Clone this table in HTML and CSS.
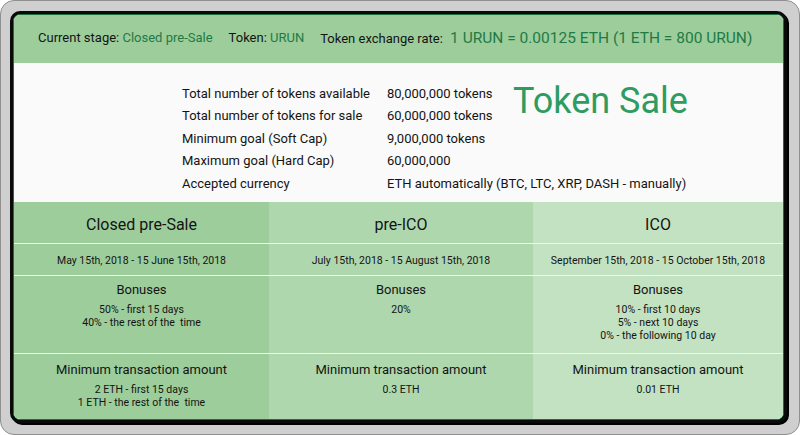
FILE: index.html
```html
<!DOCTYPE html>
<html>
<head>
<meta charset="utf-8">
<link rel="stylesheet" href="styles.css">
</head>
<body>
<div class="frame">
  <div class="card">
    <div class="inner">
      <div class="topbar">
        <span class="item">Current stage: <span class="g">Closed pre-Sale</span></span>
        <span class="item">Token: <span class="g">URUN</span></span>
        <span class="item">Token exchange rate: <span class="g big">1 URUN = 0.00125 ETH (1 ETH = 800 URUN)</span></span>
      </div>
      <div class="info">
        <div class="lbl r1">Total number of tokens available</div><div class="val r1">80,000,000 tokens</div>
        <div class="lbl r2">Total number of tokens for sale</div><div class="val r2">60,000,000 tokens</div>
        <div class="lbl r3">Minimum goal (Soft Cap)</div><div class="val r3">9,000,000 tokens</div>
        <div class="lbl r4">Maximum goal (Hard Cap)</div><div class="val r4">60,000,000</div>
        <div class="lbl r5">Accepted currency</div><div class="val r5 wide">ETH automatically (BTC, LTC, XRP, DASH - manually)</div>
        <h1 class="title">Token Sale</h1>
      </div>
      <div class="stages">
        <div class="cell c1 name">Closed pre-Sale</div>
        <div class="cell c2 name">pre-ICO</div>
        <div class="cell c3 name">ICO</div>

        <div class="cell c1 date">May 15th, 2018 - 15 June 15th, 2018</div>
        <div class="cell c2 date">July 15th, 2018 - 15 August 15th, 2018</div>
        <div class="cell c3 date">September 15th, 2018 - 15 October 15th, 2018</div>

        <div class="cell c1 block">
          <div class="bh">Bonuses</div>
          <div class="bl">50% - first 15 days</div>
          <div class="bl">40% - the rest of the&nbsp; time</div>
        </div>
        <div class="cell c2 block">
          <div class="bh">Bonuses</div>
          <div class="bl">20%</div>
        </div>
        <div class="cell c3 block">
          <div class="bh">Bonuses</div>
          <div class="bl">10% - first 10 days</div>
          <div class="bl">5% - next 10 days</div>
          <div class="bl">0% - the following 10 day</div>
        </div>

        <div class="cell c1 block last">
          <div class="bh">Minimum transaction amount</div>
          <div class="bl">2 ETH - first 15 days</div>
          <div class="bl">1 ETH - the rest of the&nbsp; time</div>
        </div>
        <div class="cell c2 block last">
          <div class="bh">Minimum transaction amount</div>
          <div class="bl">0.3 ETH</div>
        </div>
        <div class="cell c3 block last">
          <div class="bh">Minimum transaction amount</div>
          <div class="bl">0.01 ETH</div>
        </div>
      </div>
    </div>
  </div>
</div>
</body>
</html>
```
FILE: styles.css
```css
* { box-sizing: border-box; }
html, body { margin: 0; padding: 0; background: #ffffff; }
body {
  font-family: Roboto, "Liberation Sans", sans-serif;
  color: #141414;
  width: 800px;
  height: 435px;
  overflow: hidden;
}
.frame {
  width: 800px;
  height: 435px;
  border: 1px solid #8f8f8f;
  border-radius: 14px;
  background: #cfcfcf;
  padding: 10px 12px 11px 9px;
  display: flex;
}
.card {
  flex: 1;
  border: 3px solid #0a0a0a;
  border-radius: 10px;
  box-shadow: 2px 2px 0 #000;
  display: flex;
  background: #0a0a0a;
}
.inner {
  flex: 1;
  border: 1px solid #1d6e3c;
  border-radius: 7px;
  overflow: hidden;
  display: flex;
  flex-direction: column;
  background: #fafafa;
}
.topbar {
  height: 48px;
  background: #9dcd9b;
  display: flex;
  align-items: center;
  padding: 0 0 3px 24px;
  font-size: 13px;
  gap: 16px;
}
.topbar .item { white-space: nowrap; }
.g { color: #1e7b45; }
.big { font-size: 15.5px; margin-left: 4px; }
.info {
  height: 139px;
  background: #fafafa;
  padding: 19px 0 0 168px;
  display: grid;
  grid-template-columns: 205px 127px auto;
  grid-auto-rows: 22.5px;
  font-size: 13px;
  align-items: center;
}
.lbl { grid-column: 1; }
.val { grid-column: 2; white-space: nowrap; }
.val.wide { grid-column: 2 / span 2; }
.r1 { grid-row: 1; } .r2 { grid-row: 2; } .r3 { grid-row: 3; } .r4 { grid-row: 4; } .r5 { grid-row: 5; }
.title {
  grid-column: 3;
  grid-row: 1 / span 3;
  align-self: start;
  margin: 1px 0 0 -1px;
  font-size: 36px;
  line-height: 1;
  font-weight: 400;
  color: #2e9c61;
  white-space: nowrap;
}
.stages {
  flex: 1;
  display: grid;
  grid-template-columns: 255px 264px 1fr;
  grid-template-rows: 41px 31px 77px 1fr;
  row-gap: 1px;
  background: #eef6ee;
}
.cell { text-align: center; }
.c1 { background: #9dcd9b; }
.c2 { background: #afd7ad; }
.c3 { background: #c3e2c2; }
.name {
  font-size: 16px;
  display: flex;
  align-items: center;
  justify-content: center;
  padding-top: 4px;
}
.date {
  font-size: 10.5px;
  display: flex;
  align-items: center;
  justify-content: center;
  padding-top: 2px;
}
.block { padding-top: 5px; }
.block.last { padding-top: 7px; }
.bh { font-size: 13px; line-height: 17px; margin-bottom: 5px; }
.bl { font-size: 10.5px; line-height: 13px; }
```
